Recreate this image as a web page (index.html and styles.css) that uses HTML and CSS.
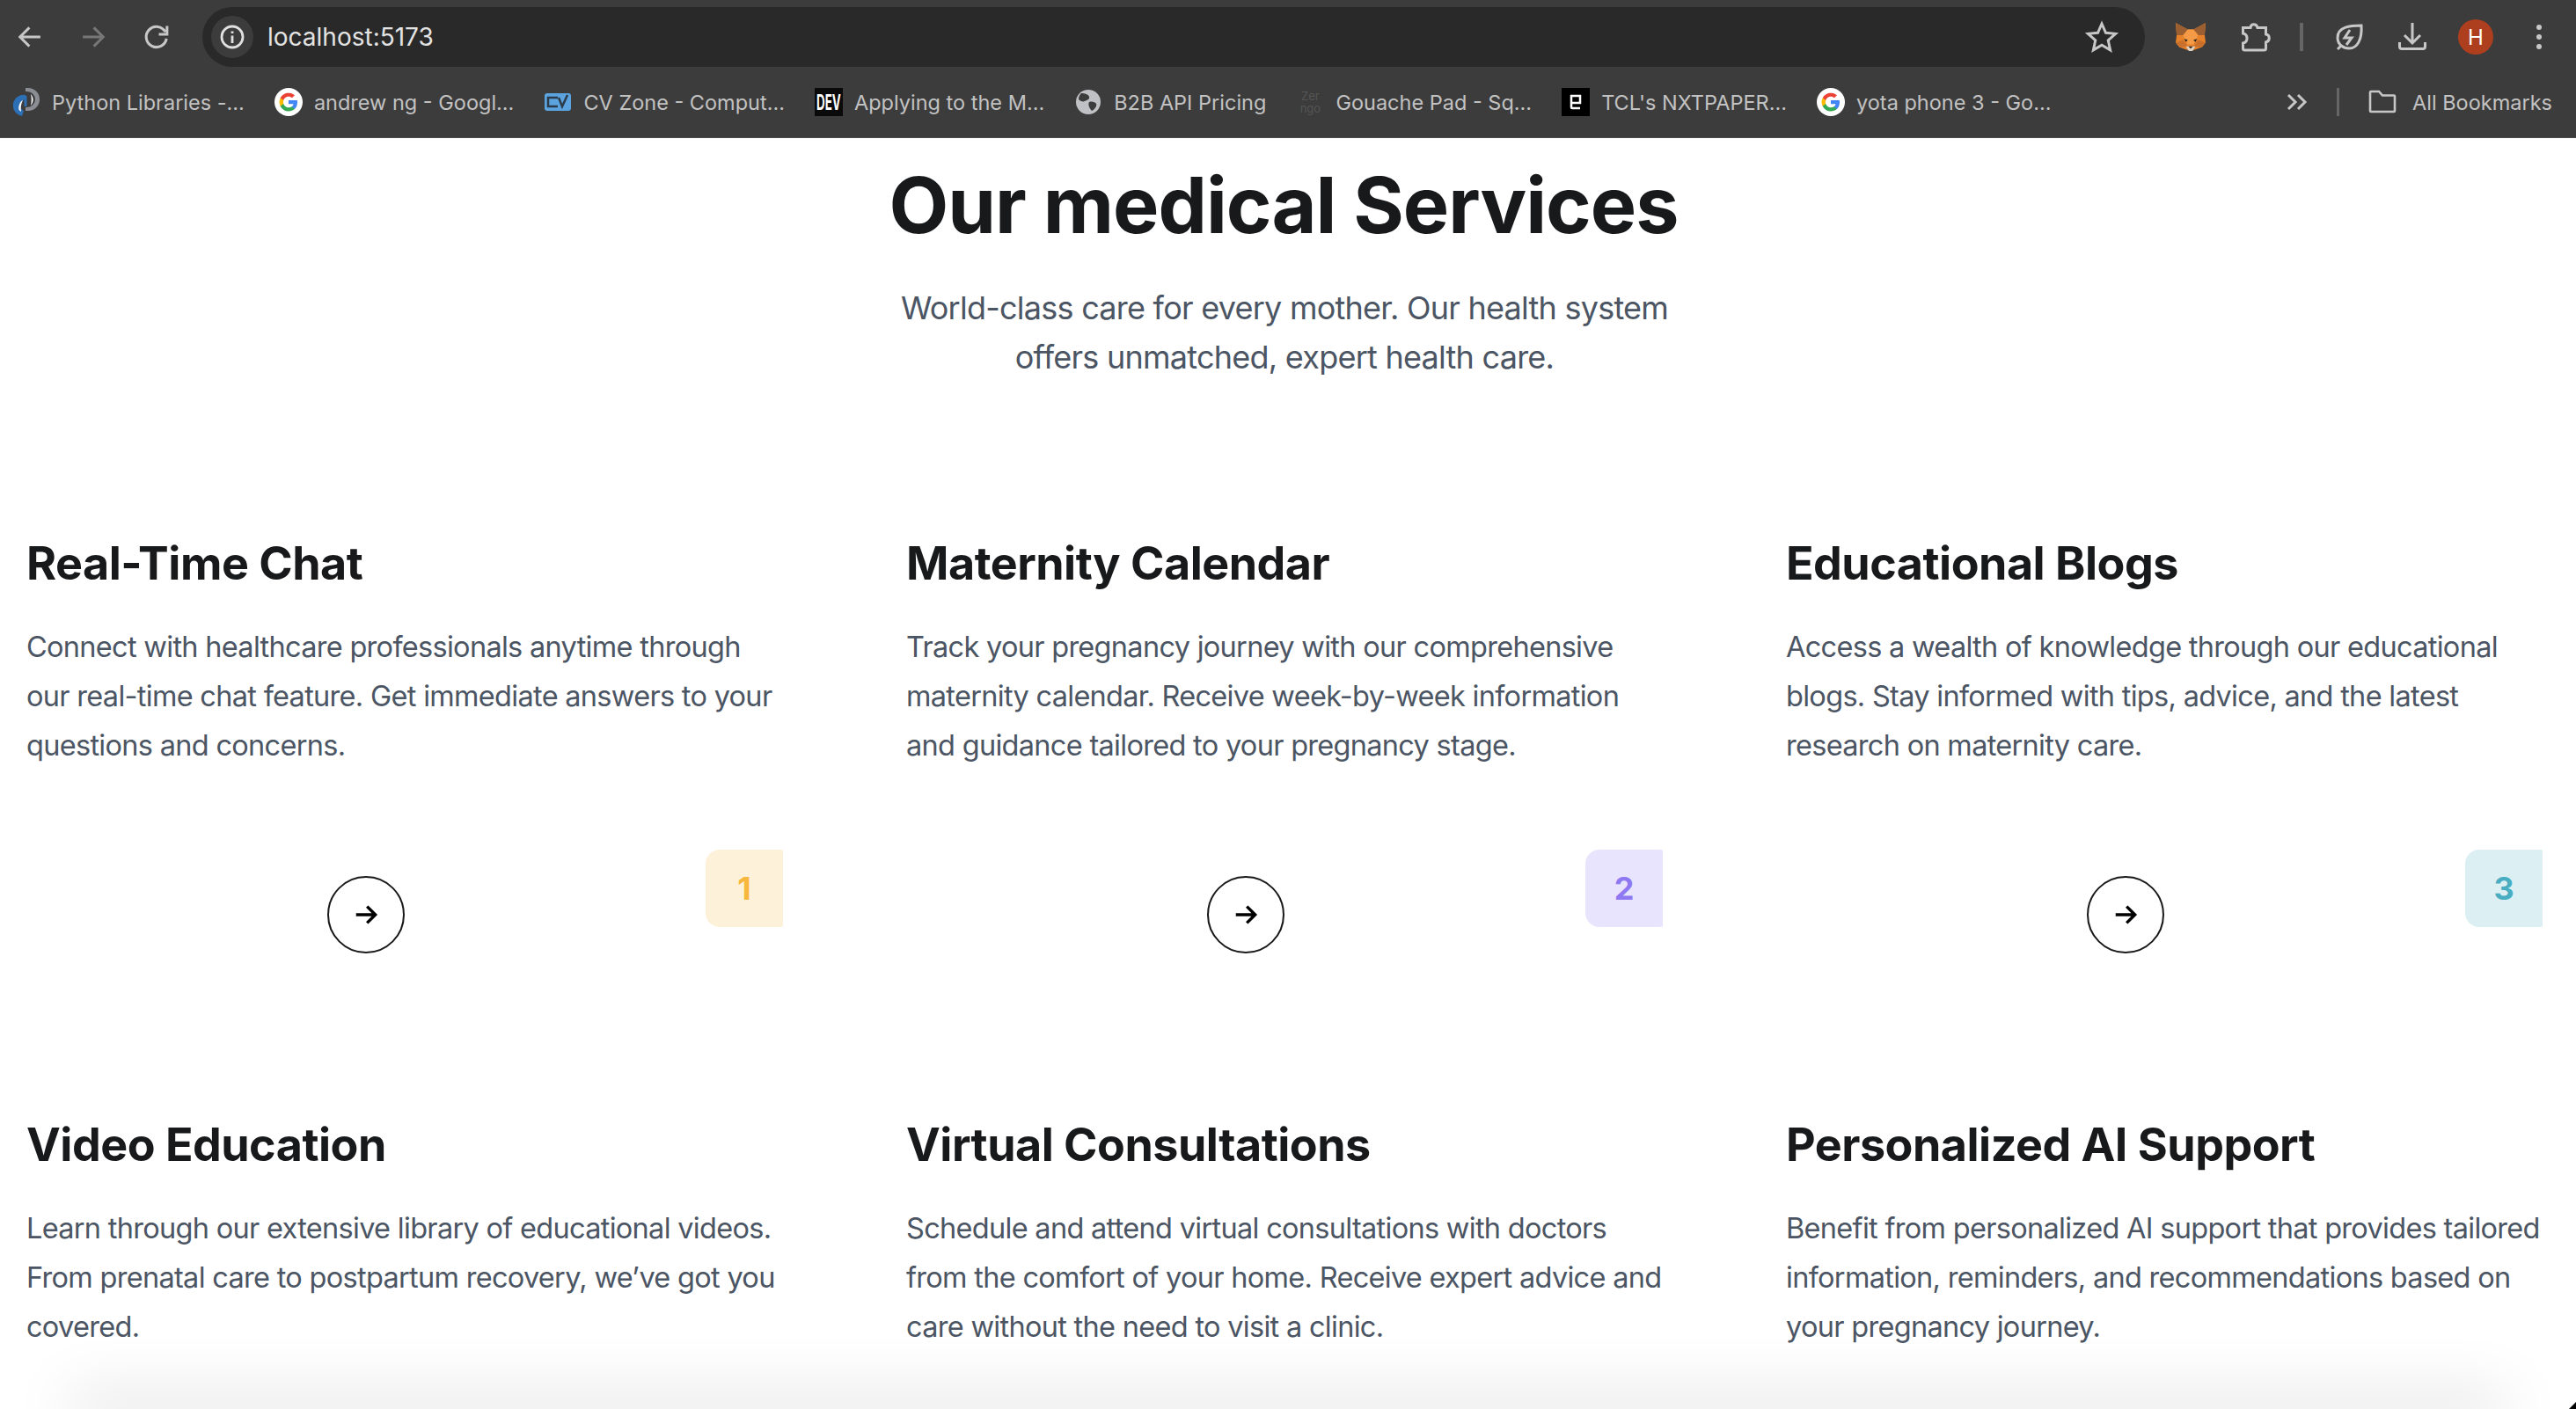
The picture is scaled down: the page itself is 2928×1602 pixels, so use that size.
FILE: index.html
```html
<!DOCTYPE html>
<html lang="en">
<head>
    <meta charset="UTF-8">
    <title>localhost:5173</title>
    <link rel="stylesheet" href="styles.css">
</head>
<body>

    <!-- Browser toolbar -->
    <header class="browser">
        <div class="toolbar">
            <svg class="nav-icon" viewBox="0 0 32 32"><path d="M25.500 16H7M15.500 7.500 7 16l8.500 8.500"/></svg>
            <svg class="nav-icon dim" viewBox="0 0 32 32"><path d="M6.500 16H25M16.500 7.500 25 16l-8.500 8.500"/></svg>
            <svg class="nav-icon" viewBox="0 0 32 32"><path d="M24 11.500a9.300 9.300 0 1 0 1 6M25.500 6v7.500H18"/></svg>
            <div class="omnibox">
                <span class="site-info">
                    <svg viewBox="0 0 32 32"><circle cx="16" cy="16" r="12"/><path d="M16 14.500V23M16 9.500v2.500"/></svg>
                </span>
                <span class="url">localhost:5173</span>
                <svg class="star" viewBox="0 0 32 32"><path d="m16 4 3.600 8.200 8.900.9-6.700 6 1.900 8.800-7.700-4.500-7.700 4.500 1.900-8.800-6.700-6 8.900-.9z"/></svg>
            </div>
            <div class="actions">
                <svg class="fox" viewBox="0 0 34 32">
                    <path fill="#e8822a" d="m1 1 13 7h6l13-7-1 13 1 8-4 5-9 3h-6l-9-3-4-5 1-8z"/>
                    <path fill="#9c5f31" d="M1 1 14 8l-5 6H2zM33 1 20 8l5 6h7z"/>
                    <path fill="#c8702c" d="M1 22l8-3 5 7-5 1-4-0zM33 22l-8-3-5 7 5 1 4 0z"/>
                    <path fill="#f59a46" d="m9 14 5-6h6l5 6-5 10h-6z"/>
                    <path fill="#ddd3c6" d="M12 26h10l-3 5h-4z"/>
                    <path fill="#2b2622" d="M14.500 26h5l-2.500 2.500zM10 18l4 1-2 2.500zM24 18l-4 1 2 2.500z"/>
                </svg>
                <svg class="tool" viewBox="0 0 40 40"><path d="M5.500 9.500H14c.5-5 7-5 8 0h9.500V17c5 .5 5 8 0 9v7a2 2 0 0 1-2 2h-22a2 2 0 0 1-2-2v-6c6-1 6-10 0-11z"/></svg>
                <span class="tool-sep"></span>
                <svg class="tool" viewBox="0 0 40 40"><path d="M34 7C22 7 7 8 7 21c0 8 7 12 13 12 10 0 15-11 14-26zM12 29l-5 5"/><path d="m21 12-6 9h8l-6 8"/></svg>
                <svg class="tool" viewBox="0 0 40 40"><path d="M20 4v22M11 18l9 9 9-9M5.500 26v5a2.500 2.500 0 0 0 2.500 2.500h24a2.500 2.500 0 0 0 2.500-2.500v-5"/></svg>
                <span class="avatar">H</span>
                <span class="menu-dots"><i></i><i></i><i></i></span>
            </div>
        </div>
        <nav class="bookmarks">
            <ul class="bookmark-list">
                <li>
                    <svg viewBox="0 0 32 32">
                        <path fill="#8a8d93" d="M15 0h3a13 13 0 0 1 0 26h-3v-4h2a9 9 0 0 0 0-18h-2z"/>
                        <path fill="#2c6fb5" d="M15 8A12 12 0 0 0 11 32l2-6A7 7 0 0 1 15 13z"/>
                        <path fill="#2c6fb5" d="M13.500 9h3v12h-3z"/>
                        <path fill="#fff" d="M7.500 25c-1-6 2-10 4.500-11-2 4-3 8-2 13zM21 7c3.500 4 3.500 9 0 13 1-4 1-9 0-13z"/>
                    </svg>
                    Python Libraries -...
                </li>
                <li>
                    <svg viewBox="0 0 32 32"><circle cx="16" cy="16" r="16" fill="#fff"/><path fill="#4285f4" d="M26 16.300c0-.8-.1-1.500-.2-2.200H16v4.200h5.600a4.800 4.800 0 0 1-2.100 3.100v2.700h3.400c2-1.800 3.100-4.500 3.100-7.800z"/><path fill="#34a853" d="M16 26.500c2.800 0 5.200-.9 6.900-2.500l-3.400-2.700c-.9.600-2.100 1-3.500 1-2.700 0-5-1.800-5.800-4.300H6.700v2.700a10.500 10.500 0 0 0 9.300 5.800z"/><path fill="#fbbc05" d="M10.200 18a6.300 6.300 0 0 1 0-4V11.300H6.700a10.500 10.500 0 0 0 0 9.400z"/><path fill="#ea4335" d="M16 9.700c1.500 0 2.900.5 4 1.600l3-3A10.500 10.500 0 0 0 6.700 11.300l3.500 2.700c.8-2.500 3.100-4.300 5.800-4.300z"/></svg>
                    andrew ng - Googl...
                </li>
                <li>
                    <svg viewBox="0 0 32 32"><rect x="1" y="6" width="30" height="20" rx="3" fill="#5ba4e0"/><path fill="none" stroke="#2d3b48" stroke-width="2.500" d="M16 11H5v10h11M17 11l4 10 6-13"/></svg>
                    CV Zone - Comput...
                </li>
                <li>
                    <span class="fav-box dev"><b>DEV</b></span>
                    Applying to the M...
                </li>
                <li>
                    <svg viewBox="0 0 32 32"><circle cx="16" cy="16" r="14" fill="#c0c1c4"/><path fill="#3c3c3c" d="M8 6c4 0 8 1 9 4s-3 4-5 5-5 0-7-2c0-3 1-5 3-7zM17 16c3-1 7 0 8 2s-1 6-5 8c-2-2-5-7-3-10z"/></svg>
                    B2B API Pricing
                </li>
                <li>
                    <span class="fav-box faint">Zer<br>ngo</span>
                    Gouache Pad - Sq...
                </li>
                <li>
                    <svg viewBox="0 0 32 32"><rect width="32" height="32" fill="#000"/><path fill="none" stroke="#fff" stroke-width="2.500" d="M11 9h10v8H11zM11 17v5q0 1 1 1h9"/></svg>
                    TCL's NXTPAPER...
                </li>
                <li>
                    <svg viewBox="0 0 32 32"><circle cx="16" cy="16" r="16" fill="#fff"/><path fill="#4285f4" d="M26 16.300c0-.8-.1-1.500-.2-2.200H16v4.200h5.600a4.800 4.800 0 0 1-2.100 3.100v2.700h3.400c2-1.800 3.100-4.500 3.100-7.800z"/><path fill="#34a853" d="M16 26.500c2.800 0 5.200-.9 6.900-2.500l-3.400-2.700c-.9.600-2.100 1-3.500 1-2.700 0-5-1.800-5.800-4.300H6.700v2.700a10.500 10.500 0 0 0 9.300 5.800z"/><path fill="#fbbc05" d="M10.200 18a6.300 6.300 0 0 1 0-4V11.300H6.700a10.500 10.500 0 0 0 0 9.400z"/><path fill="#ea4335" d="M16 9.700c1.500 0 2.900.5 4 1.600l3-3A10.500 10.500 0 0 0 6.700 11.300l3.500 2.700c.8-2.500 3.100-4.300 5.800-4.300z"/></svg>
                    yota phone 3 - Go...
                </li>
            </ul>
            <svg class="more" viewBox="0 0 30 30"><path d="m5 7 8 8-8 8M16 7l8 8-8 8"/></svg>
            <span class="bar-sep"></span>
            <div class="all-bookmarks">
                <svg viewBox="0 0 38 38"><path d="M5 8a1 1 0 0 1 1-1h9l4 4.500h13a1 1 0 0 1 1 1V29a1 1 0 0 1-1 1H6a1 1 0 0 1-1-1z"/></svg>
                All Bookmarks
            </div>
        </nav>
    </header>

    <!-- Services section -->
    <main class="services">
        <h1>Our medical Services</h1>
        <p class="services-intro">World-class care for every mother. Our health system<br>offers unmatched, expert health care.</p>

        <section class="service-grid">
            <article class="service-card">
                <h3>Real-Time Chat</h3>
                <p>Connect with healthcare professionals anytime through<br>our real-time chat feature. Get immediate answers to your<br>questions and concerns.</p>
                <div class="card-footer">
                    <a class="arrow-btn"><svg viewBox="0 0 24 24"><path d="M3 12h17M13 4.500l7.500 7.500-7.500 7.500"/></svg></a>
                    <span class="badge badge-yellow">1</span>
                </div>
            </article>
            <article class="service-card">
                <h3>Maternity Calendar</h3>
                <p>Track your pregnancy journey with our comprehensive<br>maternity calendar. Receive week-by-week information<br>and guidance tailored to your pregnancy stage.</p>
                <div class="card-footer">
                    <a class="arrow-btn"><svg viewBox="0 0 24 24"><path d="M3 12h17M13 4.500l7.500 7.500-7.500 7.500"/></svg></a>
                    <span class="badge badge-purple">2</span>
                </div>
            </article>
            <article class="service-card">
                <h3>Educational Blogs</h3>
                <p>Access a wealth of knowledge through our educational<br>blogs. Stay informed with tips, advice, and the latest<br>research on maternity care.</p>
                <div class="card-footer">
                    <a class="arrow-btn"><svg viewBox="0 0 24 24"><path d="M3 12h17M13 4.500l7.500 7.500-7.500 7.500"/></svg></a>
                    <span class="badge badge-teal">3</span>
                </div>
            </article>
            <article class="service-card">
                <h3>Video Education</h3>
                <p>Learn through our extensive library of educational videos.<br>From prenatal care to postpartum recovery, we’ve got you<br>covered.</p>
            </article>
            <article class="service-card">
                <h3>Virtual Consultations</h3>
                <p>Schedule and attend virtual consultations with doctors<br>from the comfort of your home. Receive expert advice and<br>care without the need to visit a clinic.</p>
            </article>
            <article class="service-card">
                <h3>Personalized AI Support</h3>
                <p>Benefit from personalized AI support that provides tailored<br>information, reminders, and recommendations based on<br>your pregnancy journey.</p>
            </article>
        </section>
    </main>

    <!-- Shadow of the window below, and the rounded window corner -->
    <div class="bottom-shadow"></div>
    <span class="corner"></span>

</body>
</html>
```
FILE: styles.css
```css
/* Reset styles */
* {
    margin: 0;
    padding: 0;
    box-sizing: border-box;
}

html, body {
    height: 100%;
    overflow: hidden;
}

body {
    background: #fff;
    font-family: 'Inter', sans-serif;
    position: relative;
}

/* Browser toolbar */
.browser {
    height: 157px;
    background: #3c3c3c;
    border-bottom: 1px solid #4a4a4a;
    color: #c2c2c2;
}

.toolbar {
    height: 76px;
    padding: 8px 0 0 14px;
    display: flex;
    align-items: flex-start;
}

.nav-icon {
    width: 40px;
    height: 40px;
    margin: 14px 32px 0 0;
    flex: none;
    fill: none;
    stroke: #c7c7c7;
    stroke-width: 2.400;
}

.nav-icon.dim {
    stroke: #777;
}

.omnibox {
    width: 2208px;
    height: 68px;
    flex: none;
    background: #292929;
    border-radius: 34px;
    display: flex;
    align-items: center;
    padding: 0 28px 0 10px;
}

.site-info {
    width: 48px;
    height: 48px;
    border-radius: 50%;
    background: #3c3c3c;
    display: flex;
    align-items: center;
    justify-content: center;
}

.site-info svg {
    width: 32px;
    height: 32px;
    fill: none;
    stroke: #e0e0e0;
    stroke-width: 2.800;
}

.url {
    margin-left: 16px;
    font-size: 28px;
    color: #e3e3e3;
    flex: 1;
}

.star {
    width: 40px;
    height: 40px;
    margin-right: 1px;
    fill: none;
    stroke: #c7c7c7;
    stroke-width: 2.400;
}

.actions {
    display: flex;
    align-items: center;
    height: 68px;
    margin-left: 32px;
}

.fox {
    width: 40px;
    height: 34px;
    flex: none;
}

.tool {
    width: 40px;
    height: 40px;
    flex: none;
    fill: none;
    stroke: #c7c7c7;
    stroke-width: 3;
}

.fox + .tool {
    margin-left: 34px;
}

.tool-sep {
    width: 4px;
    height: 32px;
    background: #666;
    margin: 0 32px 0 30px;
}

.tool + .tool {
    margin-left: 32px;
}

.avatar {
    width: 40px;
    height: 40px;
    margin-left: 32px;
    border-radius: 50%;
    background: #ae3f1e;
    color: #fff;
    font-size: 24px;
    display: flex;
    align-items: center;
    justify-content: center;
}

.menu-dots {
    margin-left: 49px;
    display: flex;
    flex-direction: column;
    gap: 5px;
}

.menu-dots i {
    width: 6px;
    height: 6px;
    border-radius: 50%;
    background: #c7c7c7;
}

/* Bookmarks bar */
.bookmarks {
    height: 80px;
    padding: 0 27px 0 14px;
    display: flex;
    align-items: center;
    font-size: 23.500px;
}

.bookmark-list {
    list-style: none;
    display: flex;
    flex: 1;
    gap: 34px;
}

.bookmark-list li {
    display: flex;
    align-items: center;
    gap: 13px;
    white-space: nowrap;
}

.bookmark-list svg {
    width: 32px;
    height: 32px;
    flex: none;
}

.fav-box {
    width: 32px;
    height: 32px;
    flex: none;
    display: flex;
    align-items: center;
    justify-content: center;
    text-align: center;
}

.fav-box.dev {
    background: #0a0a0a;
    color: #fff;
    font-size: 24px;
    overflow: hidden;
}

.fav-box.dev b {
    transform: scaleX(0.56);
}

.fav-box.faint {
    color: #555;
    font-size: 13px;
    line-height: 14px;
}

.more {
    width: 30px;
    height: 30px;
    fill: none;
    stroke: #c7c7c7;
    stroke-width: 3;
}

.bar-sep {
    width: 3px;
    height: 32px;
    background: #666;
    margin: 0 30px 0 30px;
}

.all-bookmarks {
    display: flex;
    align-items: center;
    gap: 15px;
}

.all-bookmarks svg {
    width: 38px;
    height: 38px;
    fill: none;
    stroke: #c7c7c7;
    stroke-width: 2.600;
}

/* Services section */
.services {
    padding: 28px 38px 0 30px;
}

.services h1 {
    font-size: 88px;
    line-height: 96px;
    letter-spacing: -1px;
    font-weight: 700;
    text-align: center;
    color: #18191b;
    margin-right: 2px;
}

.services-intro {
    margin-top: 41px;
    font-size: 36px;
    line-height: 56px;
    letter-spacing: -0.75px;
    text-align: center;
    color: #4b5563;
}

.service-grid {
    margin-top: 175px;
    display: grid;
    grid-template-columns: repeat(3, 860px);
    column-gap: 140px;
    row-gap: 186px;
}

.service-card h3 {
    font-size: 52px;
    line-height: 64px;
    letter-spacing: -0.5px;
    font-weight: 700;
    color: #18191b;
}

.service-card p {
    margin-top: 35px;
    font-size: 32.500px;
    line-height: 56px;
    letter-spacing: -0.7px;
    color: #4b5563;
}

.card-footer {
    display: grid;
    grid-template-columns: 1fr 88px;
    margin-top: 90px;
    overflow: hidden;
}

.arrow-btn {
    width: 88px;
    height: 88px;
    margin: 30px auto 0;
    border: 2.500px solid #18191b;
    border-radius: 50%;
    display: flex;
    align-items: center;
    justify-content: center;
}

.arrow-btn svg {
    width: 30px;
    height: 30px;
    fill: none;
    stroke: #000;
    stroke-width: 2.800;
}

.badge {
    width: 100px;
    height: 88px;
    border-radius: 16px;
    display: flex;
    align-items: center;
    justify-content: center;
    padding-right: 12px;
    font-size: 36px;
    font-weight: 700;
}

.badge-yellow {
    background: #fdf1da;
    color: #f7b73c;
}

.badge-purple {
    background: #e9e4fd;
    color: #8f79f2;
}

.badge-teal {
    background: #dceff3;
    color: #4aaec2;
}

/* Overlays on the window edge */
.bottom-shadow {
    position: absolute;
    left: 90px;
    right: 90px;
    bottom: 0;
    height: 0;
    box-shadow: 0 0 70px 10px rgba(0, 0, 0, 0.22);
}

.corner {
    position: absolute;
    right: 0;
    bottom: 0;
    width: 8px;
    height: 8px;
    background: #000;
    clip-path: polygon(100% 0, 100% 100%, 0 100%);
}
```
